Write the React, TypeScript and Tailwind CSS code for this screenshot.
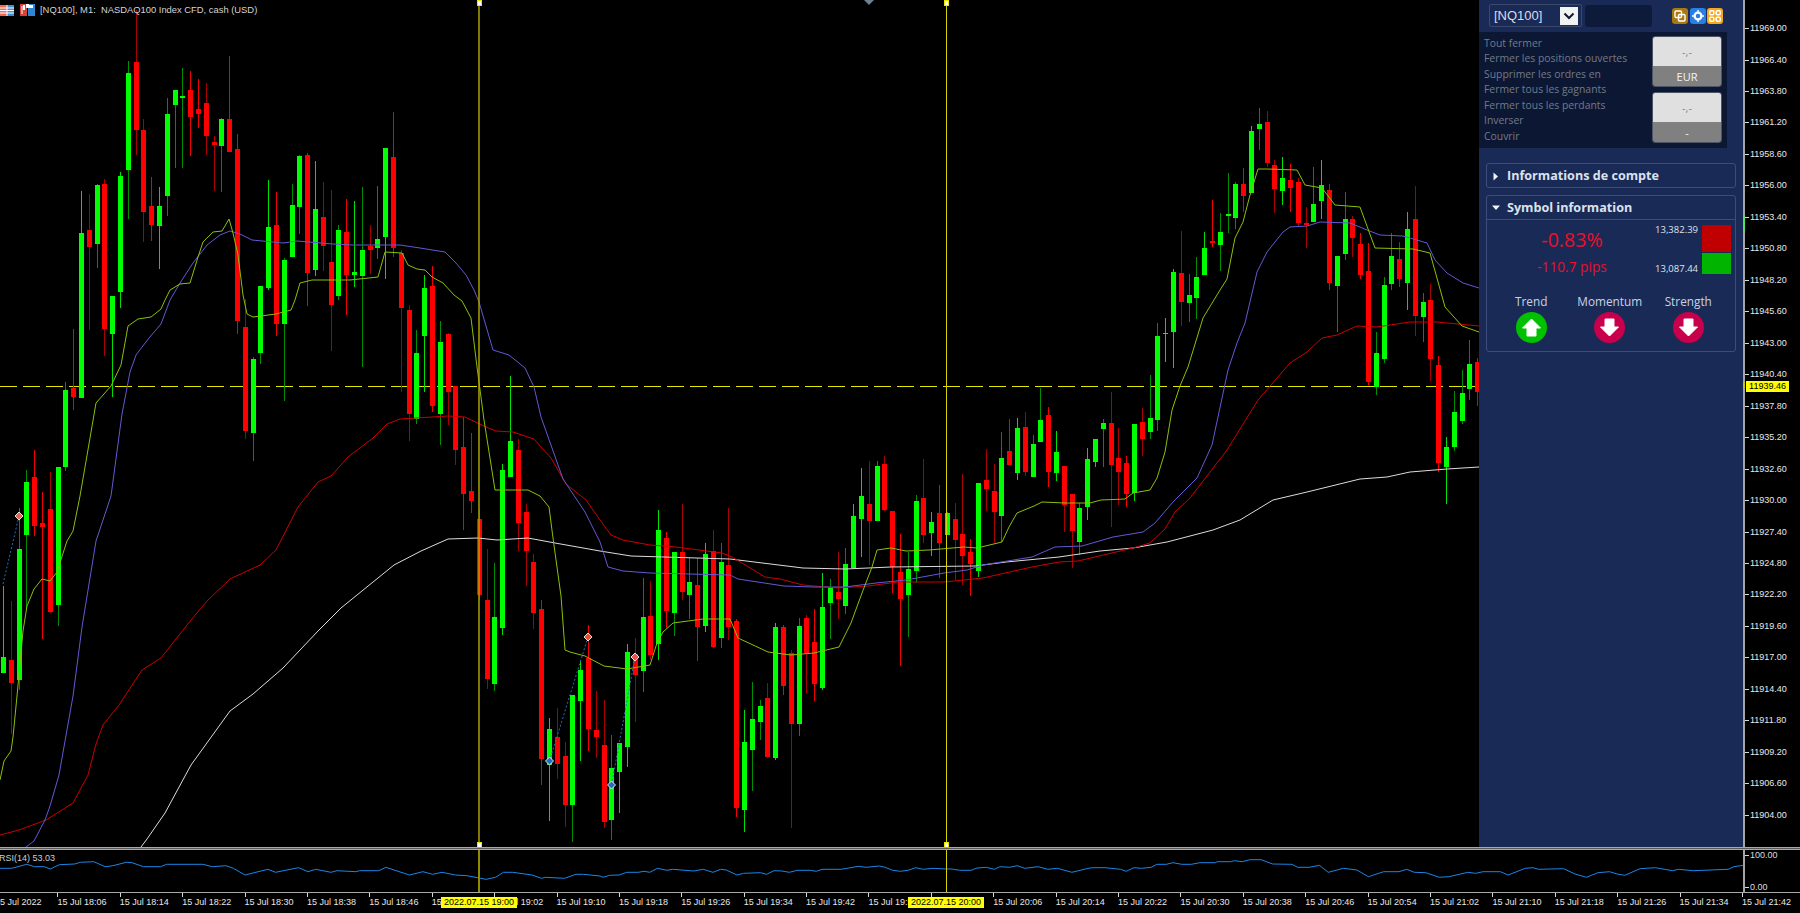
import React from "react";

type Pt = [number, number];
// wick top, body top, body bottom, wick bottom, 1 = green / 0 = red
const C: [number, number, number, number, number][] = [
[586,657,673,673,1],[601,660,683,734,0],[508,549,680,690,1],[470,482,535,610,1],[450,477,526,536,0],[492,523,527,639,0],[472,509,612,613,0],[467,467,605,626,1],[382,390,467,471,1],[329,388,397,410,0],
[191,233,398,398,1],[194,230,247,330,0],[184,185,244,268,1],[179,184,329,356,0],[296,296,334,397,1],[172,176,292,308,1],[61,73,170,219,1],[10,62,130,155,0],[119,130,212,242,0],[177,206,225,241,0],
[187,206,226,269,1],[98,114,196,216,1],[90,90,105,168,1],[68,96,98,168,1],[71,90,117,156,0],[79,109,114,128,0],[83,103,136,155,0],[136,142,145,191,0],[118,119,146,192,1],[56,119,152,152,0],
[134,149,321,334,0],[299,327,431,439,0],[357,359,433,461,1],[286,286,353,364,1],[180,227,288,290,1],[192,225,324,336,0],[258,260,324,401,1],[184,205,257,257,1],[155,156,207,234,1],[153,155,273,306,0],
[161,209,270,276,1],[182,217,246,271,0],[190,262,305,351,0],[225,230,296,300,1],[199,232,275,315,0],[201,272,275,287,1],[187,250,276,367,1],[225,246,250,274,0],[186,239,248,259,1],[148,148,237,279,1],
[112,157,248,257,0],[250,253,308,392,0],[305,310,414,441,0],[330,353,419,424,1],[275,288,336,392,1],[266,286,406,412,0],[321,342,414,445,1],[333,334,392,425,0],[386,386,450,465,0],[417,447,494,530,0],
[433,491,501,513,0],[510,519,595,600,0],[549,600,679,689,0],[563,617,684,691,1],[464,470,628,635,1],[376,441,477,477,1],[439,450,523,551,0],[504,512,551,586,0],[554,562,613,629,0],[600,609,759,785,0],
[718,729,765,821,1],[708,737,764,779,0],[742,756,805,827,0],[695,695,805,842,1],[661,670,701,761,1],[625,658,729,751,0],[691,730,737,758,0],[700,745,822,828,0],[735,768,820,840,1],[743,743,772,813,1],
[644,652,747,767,1],[638,654,675,722,0],[578,617,671,692,1],[581,616,655,660,0],[510,530,644,660,1],[532,538,611,628,0],[552,552,613,636,1],[504,552,592,600,0],[558,582,595,619,1],[558,585,627,661,0],
[543,554,626,632,1],[530,551,647,648,0],[543,562,638,648,1],[508,565,627,640,0],[619,621,808,817,0],[710,742,810,832,1],[682,719,750,791,1],[700,706,722,740,1],[683,698,757,758,0],[623,627,758,760,1],
[625,627,686,695,0],[650,653,724,828,0],[618,626,724,736,1],[615,618,653,693,0],[609,642,684,701,0],[573,607,688,690,1],[579,587,603,639,1],[552,592,599,619,0],[548,564,606,614,1],[504,516,568,569,1],
[468,496,519,557,1],[461,504,521,565,0],[461,466,521,521,1],[456,464,510,511,0],[511,511,567,593,0],[534,572,599,666,0],[552,569,595,637,1],[495,501,571,583,1],[459,498,535,543,0],[512,522,533,556,1],
[485,513,543,578,0],[512,513,535,535,1],[503,519,540,580,0],[474,534,556,585,0],[539,552,564,596,0],[483,483,571,577,1],[449,480,489,511,0],[464,491,512,543,0],[432,458,516,542,1],[419,451,465,465,0],
[418,428,473,480,1],[412,427,472,476,0],[435,444,477,477,1],[388,420,442,442,1],[407,415,472,487,0],[431,452,473,481,1],[466,466,505,532,0],[494,494,531,568,0],[503,508,542,555,1],[448,459,507,520,1],
[439,439,462,467,1],[419,423,429,467,1],[392,423,465,527,0],[428,458,472,505,0],[456,463,494,507,0],[424,424,493,501,1],[408,422,439,456,0],[375,418,432,439,1],[323,336,420,431,1],[318,333,334,362,1],
[269,272,332,368,1],[231,273,302,326,0],[274,295,303,322,1],[257,277,298,319,1],[232,248,275,275,1],[200,241,243,247,0],[213,232,245,271,1],[173,214,216,233,1],[182,184,218,229,1],[168,184,196,212,0],
[126,131,193,193,1],[108,124,129,150,1],[111,122,163,167,0],[160,165,189,213,0],[157,178,191,205,1],[164,180,188,212,0],[178,182,223,226,0],[207,223,225,248,0],[167,204,222,222,1],[160,185,201,219,1],
[184,190,283,290,0],[256,256,286,332,1],[192,219,254,260,1],[216,219,238,257,0],[233,244,275,279,0],[243,271,382,385,0],[332,353,387,395,1],[277,285,359,363,1],[233,256,284,290,1],[242,259,279,287,0],
[212,229,283,310,1],[186,219,316,336,0],[293,302,317,342,1],[284,300,359,381,0],[356,365,463,472,0],[437,447,467,504,1],[391,412,447,451,1],[370,393,421,424,1],[340,364,389,400,1],[358,362,392,406,0],
];

const GREEN: Pt[] = [[0,780],[4,761],[11,751],[13,737],[17,696],[23,631],[27,606],[34,589],[42,579],[50,581],[57,572],[67,541],[73,531],[80,496],[90,438],[96,403],[111,386],[121,365],[128,326],[138,319],[151,317],[161,309],[165,300],[170,290],[180,284],[190,283],[198,257],[203,242],[213,232],[222,231],[229,219],[233,233],[238,255],[243,295],[247,314],[253,317],[276,314],[291,310],[295,300],[300,283],[312,280],[350,280],[378,277],[385,252],[402,253],[408,265],[417,269],[425,270],[432,277],[443,283],[454,295],[462,301],[471,318],[477,367],[484,420],[495,490],[528,490],[540,496],[549,507],[553,538],[561,596],[565,650],[570,652],[585,656],[604,666],[627,669],[650,665],[657,643],[663,632],[673,623],[703,619],[730,619],[738,638],[753,645],[768,652],[791,655],[814,653],[839,647],[851,623],[862,593],[872,567],[877,550],[891,548],[906,551],[929,550],[964,547],[977,548],[1002,542],[1009,527],[1017,513],[1034,506],[1042,502],[1065,503],[1090,503],[1101,500],[1125,499],[1133,493],[1150,490],[1157,478],[1165,452],[1172,410],[1180,386],[1188,367],[1203,318],[1220,290],[1227,279],[1235,238],[1243,222],[1250,195],[1258,169],[1267,169],[1297,170],[1305,185],[1322,188],[1335,205],[1360,207],[1375,248],[1413,249],[1430,253],[1445,307],[1462,326],[1479,332]];

const BLUE: Pt[] = [[26,847],[34,841],[45,820],[50,806],[59,775],[73,696],[82,627],[96,541],[111,496],[122,414],[130,372],[136,355],[149,338],[161,324],[170,300],[180,283],[193,263],[207,245],[220,235],[230,231],[240,234],[252,240],[283,243],[297,241],[333,244],[353,245],[400,245],[420,248],[445,252],[456,263],[466,275],[474,290],[479,302],[493,350],[509,355],[525,368],[534,387],[541,417],[563,479],[585,512],[600,542],[608,567],[623,571],[650,573],[730,575],[738,579],[784,586],[814,587],[845,587],[876,583],[906,580],[944,573],[967,570],[983,565],[1032,557],[1055,547],[1082,546],[1113,537],[1143,532],[1155,523],[1173,502],[1197,478],[1212,445],[1228,370],[1237,343],[1245,323],[1257,272],[1267,252],[1283,232],[1290,227],[1307,226],[1320,222],[1350,223],[1367,230],[1380,235],[1403,236],[1427,243],[1435,260],[1447,273],[1463,283],[1479,288]];

const RED: Pt[] = [[0,835],[19,830],[46,820],[73,803],[88,775],[96,744],[103,725],[119,705],[142,670],[161,658],[176,639],[191,620],[207,601],[230,579],[260,565],[276,550],[298,507],[318,482],[331,476],[348,457],[373,438],[387,424],[400,419],[448,416],[465,417],[486,427],[496,431],[513,432],[534,439],[551,458],[566,484],[586,500],[600,520],[611,535],[623,540],[650,545],[676,547],[722,553],[732,557],[765,577],[780,579],[803,585],[837,588],[868,586],[898,582],[944,582],[983,578],[1032,567],[1059,562],[1078,561],[1133,548],[1150,543],[1165,529],[1175,512],[1190,498],[1227,450],[1258,400],[1290,363],[1307,352],[1322,338],[1337,335],[1357,326],[1377,327],[1410,322],[1437,322],[1479,326]];

const WHITE: Pt[] = [[141,847],[147,839],[165,813],[191,765],[230,711],[253,694],[283,668],[318,631],[341,608],[394,565],[421,551],[448,539],[478,538],[497,540],[528,538],[555,543],[600,551],[631,556],[730,559],[803,568],[845,569],[891,567],[975,566],[1006,562],[1059,557],[1100,551],[1133,548],[1167,542],[1213,530],[1240,520],[1273,500],[1307,492],[1360,479],[1387,477],[1410,472],[1447,469],[1479,467]];

const RSI_A: Pt[] = [[0,145],[30,145],[70,133],[90,140],[115,140],[132,147],[155,134],[195,132],[210,127],[245,125],[275,140],[295,137],[330,127],[345,128],[375,140],[420,140],[435,133],[530,133],[555,140],[590,137],[610,145],[640,165],[700,148],[720,157],[780,143],[805,155],[825,148],[865,157],[880,152],[930,155],[940,152],[990,152],[1008,142],[1070,165],[1105,155],[1130,163],[1155,157],[1190,165],[1220,167],[1270,178],[1295,172],[1315,157],[1340,157],[1390,165],[1415,175],[1425,172],[1475,175],[1505,163],[1525,163]];
const RSI_B: Pt[] = [[0,108],[8,112],[25,106],[50,105],[70,97],[100,97],[115,94],[130,97],[150,85],[175,91],[190,88],[245,93],[270,88],[295,97],[315,88],[330,90],[358,105],[375,100],[420,98],[435,103],[455,92],[475,93],[495,97],[515,91],[550,91],[565,94],[580,88],[630,88],[650,84],[675,79],[695,82],[730,78],[745,82],[765,91],[785,94],[805,91],[825,83],[845,88],[870,85],[905,87],[920,87],[940,91],[970,91],[985,84],[1010,82],[1030,88],[1045,80],[1070,82],[1090,77],[1110,85],[1145,80],[1170,88],[1195,85],[1233,97],[1265,88],[1285,83],[1320,83],[1360,88],[1375,94],[1395,83],[1415,85],[1440,82],[1455,73],[1480,73],[1497,68],[1520,73],[1545,73]];
const RSI_C: Pt[] = [[0,128],[40,128],[45,125],[80,125],[90,122],[110,125],[130,119],[160,119],[190,132],[240,133],[255,142],[285,142],[312,136],[335,157],[375,145],[410,150],[440,170],[480,155],[520,155],[540,148],[560,157],[590,158],[625,172],[650,170],[700,157],[720,160],[740,155],[785,155],[805,165],[850,145],[870,143],[885,148],[950,146],[980,162],[1010,172],[1040,158],[1070,155],[1090,162],[1110,166],[1150,146],[1190,143],[1235,152],[1250,148],[1290,152],[1380,148],[1395,140],[1420,136]];
const k = 1 / 2.613;
const RSI: Pt[] = [
  ...RSI_A.map(([x, y]): Pt => [x * k, 820 + y / 3 - 850]),
  ...RSI_B.map(([x, y]): Pt => [600 + x * k, 840 + y / 3 - 850]),
  ...RSI_C.map(([x, y]): Pt => [1200 + x * k, 820 + y / 3 - 850]),
];

const pts = (a: Pt[]) => a.map(([x, y]) => `${x.toFixed(1)},${y.toFixed(1)}`).join(" ");

const PRICES = ["11969.00","11966.40","11963.80","11961.20","11958.60","11956.00","11953.40","11950.80","11948.20","11945.60","11943.00","11940.40","11937.80","11935.20","11932.60","11930.00","11927.40","11924.80","11922.20","11919.60","11917.00","11914.40","11911.80","11909.20","11906.60","11904.00"];
const TIMES = ["15 Jul 2022","15 Jul 18:06","15 Jul 18:14","15 Jul 18:22","15 Jul 18:30","15 Jul 18:38","15 Jul 18:46","15 Jul 18:54","15 Jul 19:02","15 Jul 19:10","15 Jul 19:18","15 Jul 19:26","15 Jul 19:34","15 Jul 19:42","15 Jul 19:50","15 Jul 19:58","15 Jul 20:06","15 Jul 20:14","15 Jul 20:22","15 Jul 20:30","15 Jul 20:38","15 Jul 20:46","15 Jul 20:54","15 Jul 21:02","15 Jul 21:10","15 Jul 21:18","15 Jul 21:26","15 Jul 21:34","15 Jul 21:42"];
const MENU = ["Tout fermer","Fermer les positions ouvertes","Supprimer les ordres en","Fermer tous les gagnants","Fermer tous les perdants","Inverser","Couvrir"];

function Handle({ x, y }: { x: number; y: number }) {
  return <rect x={x - 2} y={y - 2} width="4.5" height="5" fill="#fff" stroke="#e8e800" strokeWidth="1" shapeRendering="crispEdges" />;
}

function Marker({ x, y, color }: { x: number; y: number; color: string }) {
  return <polygon points={`${x},${y - 4} ${x + 4},${y} ${x},${y + 4} ${x - 4},${y}`} fill={color} stroke="#e4e4e4" strokeWidth="1" />;
}

function Chart() {
  return (
    <svg width="1479" height="847" viewBox="0 0 1479 847" className="block">
      <line x1="0" y1="386.5" x2="1479" y2="386.5" stroke="#e6e600" strokeDasharray="17 6" />
      {C.map(([wt, bt, bb, wb, g], i) => {
        const cx = 3.5 + 7.8 * i;
        const bright = i % 5 === 4 || i % 5 === 0;
        const wick = g ? (bright ? "#00e000" : "#008f00") : bright ? "#f00000" : "#a80000";
        const body = g ? "#00ff00" : "#ff0000";
        return (
          <g key={i} shapeRendering="crispEdges">
            <rect x={Math.round(cx - 0.5)} y={wt} width="1" height={wb - wt} fill={wick} />
            <rect x={Math.round(cx - 2.5)} y={bt} width="5" height={Math.max(bb - bt, 1)} fill={body} />
          </g>
        );
      })}
      <polyline points={pts(WHITE)} fill="none" stroke="#dcdcdc" strokeWidth="1" />
      <polyline points={pts(RED)} fill="none" stroke="#cc0000" strokeWidth="1" />
      <polyline points={pts(BLUE)} fill="none" stroke="#6259d4" strokeWidth="1" />
      <polyline points={pts(GREEN)} fill="none" stroke="#8cc008" strokeWidth="1" />
      <line x1="3" y1="584" x2="19" y2="516" stroke="#1e70c0" strokeDasharray="2 2" />
      <line x1="549.5" y1="761" x2="588" y2="637" stroke="#1e70c0" strokeDasharray="2 2" />
      <line x1="611.5" y1="785" x2="635" y2="657" stroke="#1e70c0" strokeDasharray="2 2" />
      <rect x="478" y="0" width="2" height="847" fill="#b0a800" fillOpacity="0.72" shapeRendering="crispEdges" />
      <rect x="946" y="0" width="1" height="847" fill="#d6d200" shapeRendering="crispEdges" />
      <Handle x={479} y={2} />
      <Handle x={946} y={2} />
      <Handle x={479} y={844} />
      <Handle x={946} y={844} />
      <polygon points="864,0 874,0 869,5" fill="#6f8090" />
      <Marker x={19} y={516} color="#e06a50" />
      <Marker x={588} y={637} color="#e8502f" />
      <Marker x={635} y={657} color="#f05048" />
      <Marker x={549.5} y={761} color="#1f6fc8" />
      <Marker x={611.5} y={785} color="#1f6fc8" />
    </svg>
  );
}

function TitleIcons() {
  return (
    <>
      <svg width="15" height="11" viewBox="0 0 15 11">
        <rect width="7" height="11" fill="#f06a5a" />
        <rect x="7" width="7" height="11" fill="#3d8fd8" />
        <path d="M0 3h14M0 5.5h14M0 8h14M7 0v11" stroke="#fff" strokeWidth="1" />
      </svg>
      <svg width="15" height="12" viewBox="0 0 15 12">
        <rect width="7" height="12" fill="#d8403a" />
        <rect x="8" width="7" height="12" fill="#2f86d0" />
        <rect x="3" y="1" width="2" height="5" fill="#fff" />
        <rect x="9" y="1" width="4" height="3" fill="#fff" />
        <rect x="1.5" y="2" width="1" height="8" fill="#fff" />
        <rect x="6" y="0" width="3" height="4" fill="#fff" />
      </svg>
    </>
  );
}

function ArrowBadge({ up, bg }: { up: boolean; bg: string }) {
  return (
    <div className={`w-[31px] h-[31px] rounded-full mt-[3px] flex items-center justify-center ${bg}`}>
      <svg width="31" height="31" viewBox="0 0 31 31">
        <path
          d={up ? "M15.5 7 L24.5 16 H20 V24 H11 V16 H6.5 Z" : "M15.5 24 L24.5 15 H20 V7 H11 V15 H6.5 Z"}
          fill="#fff"
          stroke="#fff"
          strokeWidth="1"
          strokeLinejoin="round"
        />
      </svg>
    </div>
  );
}

function CloseButton({ label }: { label: string }) {
  return (
    <div className="w-[70px] h-[51px] rounded-[3px] border border-[#4c5566] overflow-hidden flex flex-col">
      <div className="h-[29px] bg-[#e0e0e0] flex items-center justify-center text-[#8a8a8a] text-[11px] leading-none">-,-</div>
      <div className="flex-1 bg-[#808080] flex items-center justify-center text-[#f4f4f4] text-[11px] leading-none">{label}</div>
    </div>
  );
}

function Panel() {
  return (
    <div className="w-[264px] h-[847px] shrink-0 bg-[#1a2a56] font-['Open_Sans',sans-serif] overflow-hidden">
      <div className="flex items-center pt-[4px] pl-[10px]">
        <div className="w-[93px] h-[23px] border border-[#3b4868] rounded-[2px] flex items-center justify-between pl-[4px] pr-[3px]">
          <span className="text-[13px] leading-none text-[#d8dcea] font-['Liberation_Sans',sans-serif]">[NQ100]</span>
          <span className="w-[18px] h-[18px] bg-[#f2f2f2] flex items-center justify-center">
            <svg width="12" height="8" viewBox="0 0 12 8"><path d="M1.5 1.5 6 6l4.5-4.5" fill="none" stroke="#10182c" strokeWidth="2" /></svg>
          </span>
        </div>
        <div className="w-[67px] h-[22px] ml-[3px] rounded-[3px] bg-[#0e1a3a]" />
        <div className="flex gap-[1.5px] ml-[20px]">
          <div className="w-[16px] h-[16px] rounded-[3px] bg-[#a9780f] flex items-center justify-center">
            <svg width="12" height="12" viewBox="0 0 12 12"><rect x="1" y="1" width="6.5" height="6.5" rx="1" fill="none" stroke="#fff" strokeWidth="1.4" /><rect x="4.5" y="4.5" width="6.5" height="6.5" rx="1" fill="none" stroke="#fff" strokeWidth="1.4" /></svg>
          </div>
          <div className="w-[16px] h-[16px] rounded-[3px] bg-[#2a7fe4] flex items-center justify-center">
            <svg width="12" height="12" viewBox="0 0 12 12"><circle cx="6" cy="6" r="3.4" fill="none" stroke="#fff" strokeWidth="2.2" /><path d="M6 0v2M6 10v2M0 6h2M10 6h2" stroke="#fff" strokeWidth="1.4" /></svg>
          </div>
          <div className="w-[16px] h-[16px] rounded-[3px] bg-[#f5a81e] flex items-center justify-center">
            <svg width="12" height="12" viewBox="0 0 12 12"><rect x="0.8" y="0.8" width="4" height="4" rx="1" fill="none" stroke="#fff" strokeWidth="1.5" /><rect x="7.2" y="0.8" width="4" height="4" rx="1" fill="none" stroke="#fff" strokeWidth="1.5" /><rect x="0.8" y="7.2" width="4" height="4" rx="1" fill="none" stroke="#fff" strokeWidth="1.5" /><rect x="7.2" y="7.2" width="4" height="4" rx="1" fill="none" stroke="#fff" strokeWidth="1.5" /></svg>
          </div>
        </div>
      </div>

      <div className="mt-[5px] w-[248px] h-[116px] bg-[#0c1733] flex justify-between">
        <div className="pl-[5px] pt-[3.5px] text-[10.4px] leading-[15.6px] text-[#717b8a]">
          {MENU.map((m) => (<div key={m} className="whitespace-nowrap">{m}</div>))}
        </div>
        <div className="pr-[5px] pt-[4px] flex flex-col gap-[5px]">
          <CloseButton label="EUR" />
          <CloseButton label="-" />
        </div>
      </div>

      <div className="mt-[15px] mx-[7px] h-[25px] border border-[#3d4c7a] rounded-[3px] flex items-center pt-[1px]">
        <svg width="6" height="9" viewBox="0 0 6 9" className="ml-[6px]"><path d="M0.5 0.5 5 4.5 0.5 8.5Z" fill="#f0f2f8" /></svg>
        <span className="ml-[8px] text-[12.6px] font-bold leading-none text-[#dbe2ee] whitespace-nowrap">Informations de compte</span>
      </div>

      <div className="mt-[7px] mx-[7px] h-[157px] border border-[#3d4c7a] rounded-[3px]">
        <div className="h-[24px] border-b border-[#3d4c7a] flex items-center pt-[1px]">
          <svg width="8" height="6" viewBox="0 0 8 6" className="ml-[5px]"><path d="M0 0.5H8L4 5Z" fill="#f0f2f8" /></svg>
          <span className="ml-[7px] text-[12.6px] font-bold leading-none text-[#dbe2ee] whitespace-nowrap">Symbol information</span>
        </div>
        <div className="flex pt-[5px]">
          <div className="w-[170px] flex flex-col items-center pt-[2px]">
            <div className="text-[19.6px] leading-[26px] text-[#e8102a]">-0.83%</div>
            <div className="mt-[4px] text-[13.7px] leading-[20px] text-[#e8102a] whitespace-nowrap">-110.7 pips</div>
          </div>
          <div className="h-[51px] -mt-[1px] w-[41px] flex flex-col justify-between items-end text-[9.5px] leading-[12px] text-[#dfe4ee]">
            <span>13,382.39</span>
            <span>13,087.44</span>
          </div>
          <div className="ml-[4px] w-[29px]">
            <div className="h-[27px] bg-[#c00000]" />
            <div className="h-[21px] mt-[1px] bg-[#00b400]" />
          </div>
        </div>
        <div className="flex pl-[5px] mt-[16px]">
          {[{ t: "Trend", up: true, bg: "bg-[#00c000]" }, { t: "Momentum", up: false, bg: "bg-[#c8004c]" }, { t: "Strength", up: false, bg: "bg-[#c8004c]" }].map((b) => (
            <div key={b.t} className="w-[78.5px] flex flex-col items-center">
              <span className="text-[11.8px] leading-[16px] text-[#c9d2e4]">{b.t}</span>
              <ArrowBadge up={b.up} bg={b.bg} />
            </div>
          ))}
        </div>
      </div>
    </div>
  );
}

function PriceAxis() {
  return (
    <div className="relative flex-1 h-[847px] border-l-2 border-[#a4a4a4] pt-[12.8px]">
      {PRICES.map((p) => (
        <div key={p} className="h-[31.47px] flex items-center">
          <span className="w-[4px] h-px bg-[#d8d8d8]" />
          <span className="ml-[1px] text-[#e8e8e8] text-[9px] leading-none">{p}</span>
        </div>
      ))}
      <div className="absolute -left-[2px] top-[216px] w-[2px] h-[16px] bg-[#55e055]" />
      <div className="absolute -left-[2px] top-[382px] w-[2px] h-[6px] bg-[#c8c800]" />
      <div className="absolute left-[1px] top-[381px] w-[43px] h-[11px] bg-[#ffff00] flex items-center justify-center text-black text-[9px] leading-none">11939.46</div>
    </div>
  );
}

export default function App() {
  return (
    <div className="relative w-[1800px] h-[913px] bg-black overflow-hidden font-['Liberation_Sans',Arial,sans-serif]">
      <div className="flex h-[847px]">
        <div className="w-[1479px] shrink-0"><Chart /></div>
        <Panel />
        <PriceAxis />
      </div>

      <div className="absolute left-0 top-[4px] flex items-center gap-[5px] text-[#d4d4d4] text-[9.4px] leading-[12px]">
        <TitleIcons />
        <span className="whitespace-pre">[NQ100], M1:  NASDAQ100 Index CFD, cash (USD)</span>
      </div>

      <div className="h-px bg-[#a8a8a8]" />
      <div className="h-px bg-[#5a5a5a]" />
      <div className="h-px bg-[#a8a8a8]" />

      <div className="flex h-[42px]">
        <div className="w-[1743px] shrink-0">
          <svg width="1743" height="42" viewBox="0 0 1743 42" className="block">
            <polyline points={pts(RSI)} fill="none" stroke="#1a86e8" strokeWidth="1" />
            <rect x="478" y="0" width="2" height="42" fill="#8f8c00" shapeRendering="crispEdges" />
            <rect x="946" y="0" width="1" height="42" fill="#d6d200" shapeRendering="crispEdges" />
          </svg>
        </div>
        <div className="flex-1 border-l-2 border-[#a4a4a4] flex flex-col justify-between text-[#dcdcdc] text-[9px] leading-[10px]">
          <div className="flex items-center"><span className="w-[4px] h-px bg-[#d8d8d8]" /><span className="ml-[1px]">100.00</span></div>
          <div className="flex items-center"><span className="w-[4px] h-px bg-[#d8d8d8]" /><span className="ml-[1px]">0.00</span></div>
        </div>
      </div>

      <div className="absolute left-[-1px] top-[852px] text-[#cfcfcf] text-[9px] leading-[12px]">RSI(14) 53.03</div>

      <div className="relative h-[21px] border-t border-[#a8a8a8]">
        <div className="flex -ml-[5px]">
          {TIMES.map((t) => (
            <div key={t} className="w-[62.4px] shrink-0">
              <div className="w-px h-[4px] bg-[#d8d8d8]" />
              <div className="text-[#e8e8e8] text-[9px] leading-[10px] whitespace-nowrap">{t}</div>
            </div>
          ))}
        </div>
        <div className="absolute left-[441px] top-[4px] w-[76px] h-[11px] bg-[#ffff00] text-black text-[9px] leading-[11px] text-center">2022.07.15 19:00</div>
        <div className="absolute left-[908px] top-[4px] w-[76px] h-[11px] bg-[#ffff00] text-black text-[9px] leading-[11px] text-center">2022.07.15 20:00</div>
      </div>
    </div>
  );
}
